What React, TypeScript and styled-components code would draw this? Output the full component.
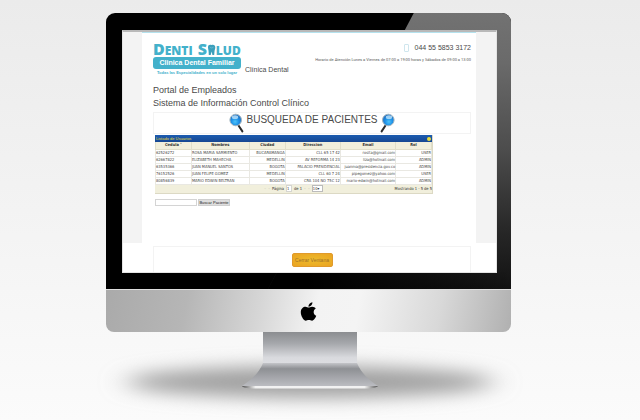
import React from "react";
import styled, { createGlobalStyle, css } from "styled-components";
import { FaApple } from "react-icons/fa";

const sans = '"Liberation Sans", Arial, sans-serif';
const compact = '"DejaVu Sans Condensed", "DejaVu Sans", sans-serif';
const teal = "#43b1cb";

const GlobalStyle = createGlobalStyle`
  *, *::before, *::after { box-sizing: border-box; }
  body { margin: 0; background: #f8f8f8; font-family: ${sans}; color: #4a4a4a; }
  h1, h2, p { margin: 0; font-weight: normal; }
  button, input, select { font-family: inherit; color: inherit; margin: 0; padding: 0; }
`;

const Stage = styled.main`
  min-height: 100vh;
  padding: 13px 23px 0 0;
  display: flex;
  justify-content: center;
  overflow: hidden;
  background: linear-gradient(#ebebeb, #f3f3f3 50%, #fbfbfb);
`;

const Monitor = styled.div`
  width: 92%;
  max-width: 405px;
  display: flex;
  flex-direction: column;
`;

const Bezel = styled.div`
  position: relative;
  padding: 17px 14px 16px 16px;
  border-radius: 9px 9px 0 0;
  overflow: hidden;
  background: #000;

  &::before {
    content: "";
    position: absolute;
    inset: 0;
    background:
      linear-gradient(90deg, #000 50%, transparent) 0 100% / 100% 17px no-repeat,
      linear-gradient(#727272, #6a6a6a 18%, #4c4c4c 50%, #282828 78%, #121212);
    clip-path: polygon(76% 0, 100% 0, 100% 100%, 40% 100%);
  }
`;

const Screen = styled.div`
  position: relative;
  min-height: 243px;
  border: 1px solid #e4e4e4;
  border-top: 2px solid #b9b9b9;
  background: #fff;
  display: flex;
  flex-direction: column;
`;

const Gutters = styled.div`
  flex: 1;
  padding: 0 20px 0 19px;
  background: #f3f3f3;
  display: flex;
`;

const Page = styled.div`
  flex: 1;
  min-width: 0;
  padding: 8px 5px 0 11px;
  border-top: 1px solid #b5e2ee;
  background: #fff;
`;

const Header = styled.header`
  display: flex;
  justify-content: space-between;
  height: 43px;
`;

const Brand = styled.div`
  display: flex;
  align-items: flex-end;
  gap: 4px;
  height: 36px;
`;

const Logo = styled.div`
  width: 88px;
  display: flex;
  flex-direction: column;
  color: ${teal};
  white-space: nowrap;
`;

const LogoName = styled.div`
  display: flex;
  align-items: baseline;
  height: 16px;
  font: 800 12px/16px "Open Sans", sans-serif;
`;

const Cap = styled.span<{ $gap?: boolean }>`
  font-size: 16px;
  margin-left: ${(p) => (p.$gap ? "5px" : "0")};
`;

const LogoBadge = styled.div`
  border-radius: 3px;
  background: ${teal};
  color: #fff;
  font: bold 7px/12px ${sans};
  text-align: center;
`;

const LogoTag = styled.div`
  font: bold 4px/8px ${sans};
  text-align: center;
`;

const BrandNote = styled.span`
  font-size: 7px;
  line-height: 14px;
  white-space: nowrap;
`;

const Contact = styled.div`
  display: flex;
  flex-direction: column;
  align-items: flex-end;
  gap: 2px;
  white-space: nowrap;
`;

const Phone = styled.div`
  display: flex;
  align-items: center;
  gap: 6px;
  font: 7px/14px ${sans};
`;

const PhoneIcon = styled.span`
  width: 5px;
  height: 8px;
  border: 1px solid #cfe6ee;
  border-radius: 1px;
`;

const Hours = styled.p`
  font: 4px/5px Roboto, sans-serif;
  color: #5a5a5a;
`;

const Intro = styled.h1`
  font: 9px/13px ${sans};
  white-space: nowrap;
`;

const TitleBox = styled.div`
  height: 22px;
  margin-top: 2px;
  border: 1px solid #f3f3f3;
  display: flex;
  justify-content: center;
  gap: 3px;
`;

const Title = styled.h2`
  font: 10px/13px ${sans};
  white-space: nowrap;
`;

const GridPanel = styled.section`
  margin: 1px 38px 0 2px;
  font: 4px/7px ${compact};
  color: #454545;
  border: solid #dcd9c4;
  border-width: 0 1px 1px 0;
`;

const GridTitle = styled.div`
  display: flex;
  align-items: center;
  justify-content: space-between;
  height: 7px;
  padding: 0 1px;
  background: linear-gradient(#1c5cb0, #164792);
  color: #e6dc3c;
  font: 4px/7px ${sans};
`;

const Dot = styled.button`
  width: 4px;
  height: 4px;
  border: 0;
  border-radius: 50%;
  background: #e8dc3a;
`;

const Table = styled.table`
  width: 100%;
  table-layout: fixed;
  border-collapse: collapse;
`;

const cell = css`
  height: 7px;
  padding: 0;
  line-height: 6px;
  white-space: nowrap;
  border: 1px solid #e9e8e2;
  border-top: 0;
`;

const Th = styled.th<{ $w: number }>`
  ${cell}
  width: ${(p) => p.$w}%;
  background: #f1efdc;
  color: #333;
  border-color: #e0dec9;
`;

const Td = styled.td<{ $right: boolean }>`
  ${cell}
  text-align: ${(p) => (p.$right ? "right" : "left")};
`;

const Pager = styled.div`
  display: grid;
  grid-template-columns: 1fr auto 1fr;
  align-items: center;
  height: 8px;
  background: #f1efdc;
  color: #2e2e2e;
`;

const PagerControls = styled.div`
  grid-column: 2;
  display: flex;
  align-items: center;
  gap: 2px;

  label { display: flex; align-items: center; gap: 2px; }
`;

const Faint = styled.span`
  color: #b4b2a4;
  white-space: pre;
`;

const PageInput = styled.input`
  width: 6px;
  height: 7px;
  border: 1px solid #d5d5d0;
  background: #fff;
  font-size: 4px;
`;

const PageSize = styled.select`
  appearance: none;
  width: 11px;
  height: 7px;
  border: 1px solid #bbb;
  border-radius: 0;
  background: #fff;
  font-size: 4px;
  line-height: 5px;
`;

const PagerInfo = styled.span`
  justify-self: end;
`;

const Search = styled.form`
  display: flex;
  gap: 1px;
  margin: 5px 0 0 2px;
`;

const SearchInput = styled.input`
  width: 42px;
  height: 7px;
  border: 1px solid #d4d4d4;
  background: #fff;
  font-size: 4px;
`;

const SearchButton = styled.button`
  width: 32px;
  height: 7px;
  border: 1px solid #cfcfcf;
  background: #dedede;
  color: #222;
  font: 4px/5px ${sans};
  white-space: nowrap;
`;

const Footer = styled.footer`
  height: 26px;
  margin: 3px 25px 0 30px;
  border: 1px solid #f3f3f3;
  border-bottom: 0;
  display: flex;
  align-items: center;
  justify-content: center;
`;

const CloseButton = styled.button`
  width: 41px;
  height: 14px;
  border: 1px solid #e09a2c;
  border-radius: 2px;
  background: radial-gradient(#edbb2d, #eaa422);
  color: #a06f28;
  font: 5px/12px ${sans};
  white-space: nowrap;
`;

const Chin = styled.div`
  height: 43px;
  border-top: 1px solid #dedede;
  border-radius: 0 0 8px 8px;
  background: linear-gradient(100deg, #aaa, #b6b6b6 20%, #d6d6d6 38%, #f3f3f3 52%, #f4f4f4 62%, #d8d8d8 82%, #b0b0b0);
  display: flex;
  align-items: center;
  justify-content: center;
  color: #000;
`;

const StandSvg = styled.svg`
  display: block;
  width: 100%;
  overflow: visible;
`;

function Tooth() {
  return (
    <svg width="9" height="11" viewBox="0 0 9 11" aria-hidden="true">
      <path
        d="M1 3.2C1 .6 3 .3 4.5 1 6.2.2 8.4.8 8.3 3.4 8.3 5 7.6 6 7.5 7.6L7.2 11H5.4L4.7 7.6 3.7 11H1.8L1.6 7.4C1.5 5.8 1 4.8 1 3.2Z"
        fill="#3b9fbb"
      />
      <path d="M3 3.4 4.6 4l1.8-.7" stroke="#7cc4d6" strokeWidth=".6" fill="none" />
    </svg>
  );
}

function Magnifier({ id, flip = false }: { id: string; flip?: boolean }) {
  return (
    <svg width="15" height="20" viewBox="0 0 15 20" aria-hidden="true">
      <defs>
        <radialGradient id={id} cx=".45" cy=".65" r=".6">
          <stop offset="0" stopColor="#4cc4fa" />
          <stop offset=".55" stopColor="#1e8fe6" />
          <stop offset="1" stopColor="#1f6fc0" />
        </radialGradient>
      </defs>
      <g transform={flip ? "translate(15 0) scale(-1 1)" : undefined}>
        <path d="M9.5 12.5 13.4 18.4" stroke="#2b2b2b" strokeWidth="2" strokeLinecap="round" />
        <circle cx="6.7" cy="7" r="5.8" fill={`url(#${id})`} stroke="#a3b4be" strokeWidth="1" />
        <ellipse cx="6" cy="4.2" rx="3.2" ry="1.9" fill="#c9e9fc" opacity=".75" />
      </g>
    </svg>
  );
}

function Stand() {
  return (
    <StandSvg viewBox="0 0 405 88" aria-hidden="true">
      <defs>
        <linearGradient id="neck" x1="0" y1="0" x2="0" y2="1">
          <stop offset="0" stopColor="#8b8d90" />
          <stop offset=".35" stopColor="#a5a7ab" />
          <stop offset=".8" stopColor="#d9dade" />
          <stop offset="1" stopColor="#dcdde1" />
        </linearGradient>
        <linearGradient id="foot" x1="0" y1="0" x2="0" y2="1">
          <stop offset="0" stopColor="#c4c5c9" />
          <stop offset=".25" stopColor="#8e9094" />
          <stop offset="1" stopColor="#bbbcc1" />
        </linearGradient>
        <linearGradient id="edge" x1="0" y1="0" x2="1" y2="0">
          <stop offset="0" stopColor="#555" />
          <stop offset=".1" stopColor="#f2f2f2" />
          <stop offset=".9" stopColor="#f2f2f2" />
          <stop offset="1" stopColor="#555" />
        </linearGradient>
        <filter id="soft" x="-20%" y="-150%" width="140%" height="400%">
          <feGaussianBlur stdDeviation="14 9" />
        </filter>
      </defs>
      <ellipse cx="204" cy="50" rx="184" ry="16" fill="#a0a0a0" filter="url(#soft)" />
      <path d="M157 0H251V32H157Z" fill="url(#neck)" />
      <path d="M157 31H251C255 41 263 48 272 54H136C145 48 153 41 157 31Z" fill="url(#foot)" />
      <path d="M136 54H272C270 56 265 56.6 258 56.6H150C143 56.6 137 56 136 54Z" fill="url(#edge)" />
    </StandSvg>
  );
}

const columns = [
  { name: "Cedula ˄", width: 13 },
  { name: "Nombres", width: 21 },
  { name: "Ciudad", width: 13 },
  { name: "Direccion", width: 20 },
  { name: "Email", width: 20 },
  { name: "Rol", width: 13 },
];

const patients = [
  ["62526272", "ROSA MARIA SARMIENTO", "BUCARAMANGA", "CLL 65 17 42", "rosita@gmail.com", "USER"],
  ["62667822", "ELIZABETH MAHECHA", "MEDELLIN", "AV REFORMA 14 23", "liza@hotmail.com", "ADMIN"],
  ["63535366", "JUAN MANUEL SANTOS", "BOGOTA", "PALACIO PRESIDENCIAL", "juanma@presidencia.gov.co", "ADMIN"],
  ["76152526", "JUAN FELIPE GOMEZ", "MEDELLIN", "CLL 60 7 24", "pipegomez@yahoo.com", "USER"],
  ["80856839", "MARIO EDWIN BELTRAN", "BOGOTA", "CRA 104 NO 75C 12", "mario-edwin@hotmail.com", "ADMIN"],
];

function PatientGrid() {
  return (
    <GridPanel>
      <GridTitle>
        Listado de Usuarios
        <Dot type="button" aria-label="Contraer" />
      </GridTitle>
      <Table>
        <thead>
          <tr>
            {columns.map((c) => (
              <Th key={c.name} $w={c.width} scope="col">{c.name}</Th>
            ))}
          </tr>
        </thead>
        <tbody>
          {patients.map((row) => (
            <tr key={row[0]}>
              {row.map((value, i) => (
                <Td key={i} $right={i > 1}>{value}</Td>
              ))}
            </tr>
          ))}
        </tbody>
      </Table>
      <Pager>
        <PagerControls>
          <Faint>–  –</Faint>
          <label>Página <PageInput defaultValue="1" /></label>
          de 1
          <Faint>–  –</Faint>
          <PageSize aria-label="Filas por página" defaultValue="10">
            <option value="10">10▾</option>
          </PageSize>
        </PagerControls>
        <PagerInfo>Mostrando 1 - 5 de 5</PagerInfo>
      </Pager>
    </GridPanel>
  );
}

export default function App() {
  return (
    <>
      <GlobalStyle />
      <Stage>
        <Monitor>
          <Bezel>
            <Screen>
              <Gutters>
                <Page>
                  <Header>
                    <Brand>
                      <Logo>
                        <LogoName>
                          <Cap>D</Cap>ENTI<Cap $gap>S</Cap><Tooth />LUD
                        </LogoName>
                        <LogoBadge>Clinica Dental Familiar</LogoBadge>
                        <LogoTag>Todas las Especialidades en un solo lugar</LogoTag>
                      </Logo>
                      <BrandNote>Clínica Dental</BrandNote>
                    </Brand>
                    <Contact>
                      <Phone><PhoneIcon />044 55 5853 3172</Phone>
                      <Hours>Horario de Atención Lunes a Viernes de 07:00 a 19:00 horas y Sábados de 09:00 a 13:00</Hours>
                    </Contact>
                  </Header>
                  <Intro>Portal de Empleados<br />Sistema de Información Control Clínico</Intro>
                  <TitleBox>
                    <Magnifier id="lensLeft" />
                    <Title>BUSQUEDA DE PACIENTES</Title>
                    <Magnifier id="lensRight" flip />
                  </TitleBox>
                  <PatientGrid />
                  <Search onSubmit={(e) => e.preventDefault()}>
                    <SearchInput aria-label="Paciente" />
                    <SearchButton type="submit">Buscar Paciente</SearchButton>
                  </Search>
                </Page>
              </Gutters>
              <Footer>
                <CloseButton type="button">Cerrar Ventana</CloseButton>
              </Footer>
            </Screen>
          </Bezel>
          <Chin><FaApple size={21} /></Chin>
          <Stand />
        </Monitor>
      </Stage>
    </>
  );
}
